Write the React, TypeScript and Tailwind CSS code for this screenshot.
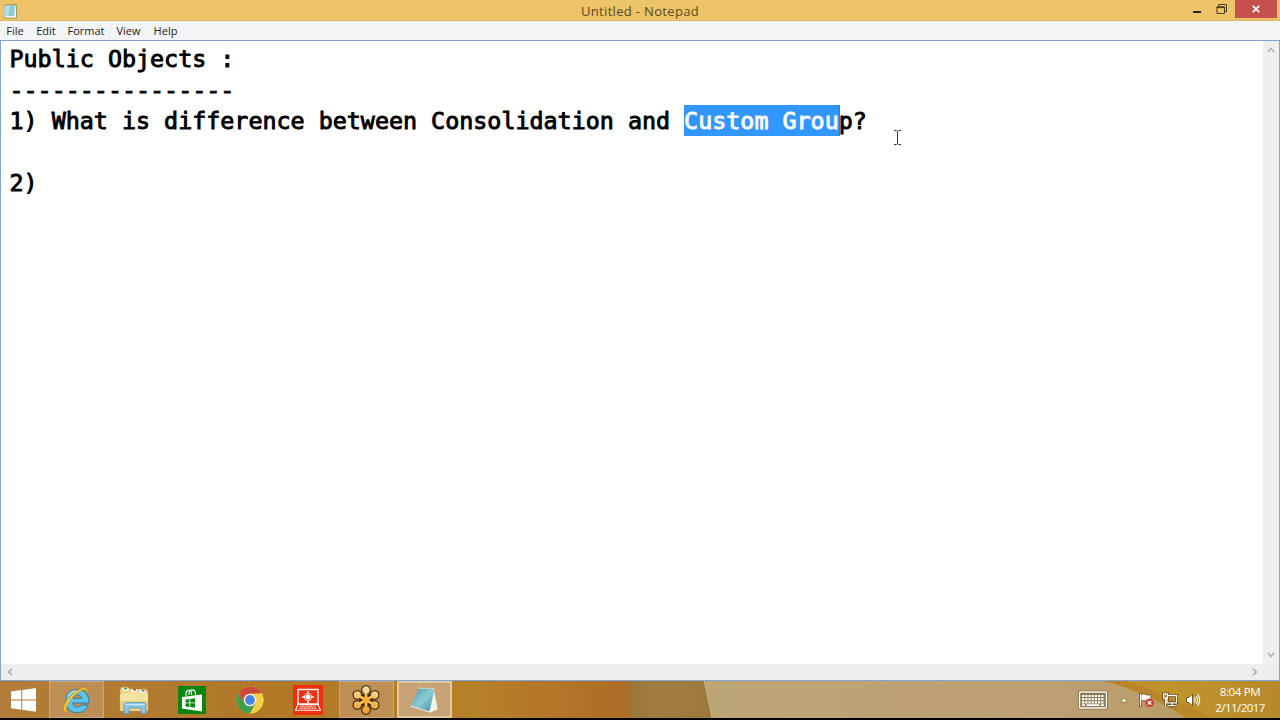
import React from "react";

const menus = [
  { label: "File", cls: "w-[30px]" },
  { label: "Edit", cls: "w-[32px]" },
  { label: "Format", cls: "w-[48px]" },
  { label: "View", cls: "w-[37px]" },
  { label: "Help", cls: "w-[37px]" },
];

function NotepadSmall() {
  return (
    <svg width="16" height="16" viewBox="0 0 16 16" className="shrink-0">
      <path d="M3 2h11.5v13H2z" fill="#f4f6ee" stroke="#8d8a63" strokeWidth=".8" />
      <path d="M2.6 2.2h10.4L12.2 13H1.6z" fill="#8fcbd6" />
      <path d="M3 2.5h5L6 12.500H2z" fill="#b5e0e4" />
      <path d="M3 1.700h11" stroke="#6d8f93" strokeDasharray="1 1" />
    </svg>
  );
}

function WindowsLogo() {
  return (
    <svg width="25" height="24" viewBox="0 0 25 24">
      <g fill="#fff">
        <path d="M0 3.600 10.300 2v9.400H0z" />
        <path d="M11.300 1.900 25 0v11.400H11.300z" />
        <path d="M0 12.400h10.300v9.300L0 20.300z" />
        <path d="M11.300 12.400H25v11.300l-13.700-1.900z" />
      </g>
    </svg>
  );
}

function ExplorerE() {
  return (
    <svg width="30" height="30" viewBox="0 0 30 30">
      <path d="M28 18H11.800c.4 2.700 2 4 4.600 4 1.800 0 3-.7 3.900-2h6.900c-1.700 4.900-5.700 7.700-10.900 7.700C9.200 27.700 4.600 23 4.600 16.300 4.600 9.500 9.200 4.600 16.200 4.600c7.400 0 12 4.900 11.800 13.400zM20.700 13.400c-.4-2.200-2-3.500-4.300-3.500s-4 1.300-4.500 3.500z" fill="#5cc3ea" stroke="#23799f" strokeWidth=".9" />
      <path d="M7 11.500C9 7.500 13 5.500 18 6.300" stroke="#b4e9fa" strokeWidth="1.300" fill="none" />
      <path d="M26.700 8.200C27.500 4 25.500 1.800 21 3.200 15.500 5 8 11.500 4.300 18 1.200 23.700 1.500 28.300 7 26.200 4.200 26 4.800 22.300 7.200 18.400 10.500 12.800 17 6.800 21.800 4.900c2.800-1.100 4.500-.3 4.900 3.300z" fill="#f8c92c" stroke="#c68a12" strokeWidth=".5" />
    </svg>
  );
}

function FolderIcon() {
  return (
    <svg width="32" height="30" viewBox="0 0 32 30">
      <path d="M2 4.500 3.500 2H10l1.500 2H29l1 3v19H2z" fill="#e9d183" stroke="#b99a4e" strokeWidth=".6" />
      <path d="M4.500 3h6v3h-6zM13 4h6v3h-6zM21.500 5h6v3h-6z" fill="#fbf7e2" />
      <path d="M6 2.800h3v1.700H6z" fill="#3fa455" />
      <path d="M15 3.900h3v1.600h-3z" fill="#d5452f" />
      <path d="M23.500 4.900h3v1.600h-3z" fill="#4d83c5" />
      <path d="M2 9 14 7l16 1.500V26H2z" fill="#f3e3a2" />
      <path d="M2 16h28v10H2z" fill="#ead27f" />
      <path d="M6 28.500v-8.500c0-1.500 1-2.500 2.500-2.500h17c1.500 0 2.500 1 2.500 2.500v8.500h-5V23H11v5.500z" fill="#8cc3e3" stroke="#5d98c0" strokeWidth=".8" />
      <path d="M7.500 19.500h19" stroke="#cdeafa" strokeWidth="1.200" />
    </svg>
  );
}

function StoreIcon() {
  return (
    <svg width="28" height="28" viewBox="0 0 28 28">
      <path fill="#0c8510" d="M0 0h28v28H0z" />
      <path d="M8 10V7.500C8 3.500 13 3 13.500 7v2M11 9V6.500c.5-3.700 6-3.500 6.500.8V9" fill="none" stroke="#e9f7e7" strokeWidth="1.200" />
      <path d="m4 11 20-2.500v17L4 22.500z" fill="#fff" />
      <path d="m7.500 13.400 3.900-.4v3.500H7.500zM12.200 12.900l4.800-.6v4.200h-4.800zM7.500 17.300h3.900v3.600l-3.900-.5zM12.200 17.300H17v4.400l-4.800-.6z" fill="#0c8510" />
    </svg>
  );
}

function ChromeIcon() {
  return (
    <svg width="28" height="28" viewBox="0 0 28 28">
      <circle cx="14" cy="14" r="13.500" fill="#f7cf45" />
      <path d="M2.300 7.200A13.500 13.500 0 0 0 14 27.500L20 17 8 17z" fill="#3f9d50" />
      <path d="M2.300 7.200A13.500 13.500 0 0 1 25.700 7.500L14 7.900 8 17z" fill="#cf4a3c" />
      <path d="M14 7.800h12a13.500 13.500 0 0 1-12 19.700L20 17z" fill="#f7cf45" />
      <circle cx="14" cy="14" r="6.300" fill="#f5f3ee" />
      <circle cx="14" cy="14" r="4.900" fill="#4a86e0" />
    </svg>
  );
}

function RemoteIcon() {
  return (
    <svg width="30" height="30" viewBox="0 0 30 30">
      <path fill="#ee2f10" d="M0 0h30v30H0z" />
      <path d="M5 4.500h20v14.500H5z" fill="none" stroke="#fff" strokeWidth="1.300" />
      <circle cx="15" cy="12" r="2.500" fill="#fff" />
      <circle cx="15" cy="12" r="3.700" fill="none" stroke="#fff" strokeWidth=".8" />
      <path d="M15 6v3M15 15v3M9 12h3M18 12h3" stroke="#fff" strokeWidth="1.400" />
      <path d="M5 19.500 2.500 25.300h25L25 19.500z" fill="none" stroke="#fff" strokeWidth="1.100" />
      <path d="M7 21.200h16M6.200 23.200h17.600" stroke="#fff" strokeWidth="1.200" strokeDasharray="1 .6" />
    </svg>
  );
}

function FlowerIcon() {
  const petals = [0, 60, 120, 180, 240, 300];
  const at = (a: number, r: number) => ({
    x: 15 + r * Math.sin((a * Math.PI) / 180),
    y: 15 - r * Math.cos((a * Math.PI) / 180),
  });
  return (
    <svg width="30" height="30" viewBox="0 0 30 30">
      <defs>
        <linearGradient id="petal" x1="0" y1="0" x2="0" y2="30" gradientUnits="userSpaceOnUse">
          <stop offset="0" stopColor="#fbe3a4" />
          <stop offset="1" stopColor="#f29a20" />
        </linearGradient>
      </defs>
      {petals.map((a) => {
        const p = at(a, 10);
        return (
          <g key={a} stroke="#2f1d0b" fill="#2f1d0b">
            <path d={`M15 15 L${p.x} ${p.y}`} strokeWidth="5.5" />
            <circle cx={p.x} cy={p.y} r="4.800" stroke="none" />
          </g>
        );
      })}
      {petals.map((a) => {
        const p = at(a, 10);
        return (
          <g key={a}>
            <path d={`M15 15 L${p.x} ${p.y}`} stroke="#f6bd50" strokeWidth="2.800" />
            <circle cx={p.x} cy={p.y} r="3.700" fill="url(#petal)" />
          </g>
        );
      })}
      <circle cx="15" cy="15" r="3.500" fill="#f5ac33" />
    </svg>
  );
}

function NotepadBig() {
  return (
    <svg width="30" height="28" viewBox="0 0 30 28">
      <defs>
        <linearGradient id="pad" x1="0" y1="0" x2="1" y2="1">
          <stop offset="0" stopColor="#4794a6" />
          <stop offset=".5" stopColor="#8ccbd6" />
          <stop offset="1" stopColor="#3f8ea2" />
        </linearGradient>
      </defs>
      <path d="M25 3 29 23.500 21 27 18 24z" fill="#f5f3e8" stroke="#a8a08a" strokeWidth=".5" />
      <path d="M10 2.500 25.500 3 20.500 25.500 1.500 19.500z" fill="url(#pad)" />
      <path d="m1.500 19.500 19 6v1L1.300 20.500z" fill="#e8f2f0" />
      <path d="M10 2.200 25.500 2.700" stroke="#dcebe8" strokeWidth="1.300" strokeDasharray="1 .8" />
    </svg>
  );
}

function Wallpaper() {
  return (
    <svg className="absolute inset-0" width="1280" height="38" viewBox="0 0 1280 38" preserveAspectRatio="none">
      <defs>
        <linearGradient id="wl">
          <stop offset="0" stopColor="#b27c3a" />
          <stop offset=".2" stopColor="#b17b34" />
          <stop offset=".45" stopColor="#b17926" />
          <stop offset=".75" stopColor="#b68029" />
          <stop offset=".87" stopColor="#b5762a" />
          <stop offset="1" stopColor="#ae6c26" />
        </linearGradient>
        <linearGradient id="wm">
          <stop offset="0" stopColor="#ae6c26" />
          <stop offset=".12" stopColor="#9a7a3a" />
          <stop offset=".35" stopColor="#a07c40" />
          <stop offset="1" stopColor="#9c7a3c" />
        </linearGradient>
        <linearGradient id="wr">
          <stop offset="0" stopColor="#bda676" />
          <stop offset=".6" stopColor="#bca072" />
          <stop offset="1" stopColor="#b7985f" />
        </linearGradient>
        <linearGradient id="wo">
          <stop offset="0" stopColor="#bd8c38" />
          <stop offset=".4" stopColor="#c0942c" />
          <stop offset="1" stopColor="#b68a2c" />
        </linearGradient>
      </defs>
      <path fill="url(#wl)" d="M0 0h628v38H0z" />
      <path fill="url(#wm)" d="M624 0h80l8 38h-88z" />
      <path fill="url(#wr)" d="M704 0h576v38H712z" />
      <path fill="url(#wo)" d="M1104 0h176v38h-92C1166 24 1142 10 1104 0z" />
      <path fill="#b37d20" opacity=".55" d="M1104 0h22C1165 12 1190 26 1214 38h-26C1166 24 1142 10 1104 0z" />
    </svg>
  );
}

function TaskButton({ state, children }: { state: "idle" | "open" | "active"; children: React.ReactNode }) {
  const skin = {
    idle: "border border-transparent",
    open: "border border-[#cda878] bg-[#c0925a]/85",
    active: "border-2 border-[#dfc9a4] bg-[#c7a375]",
  }[state];
  return <div className={`flex h-[37px] w-[55px] items-center justify-center pr-px ${skin}`}>{children}</div>;
}

function Keyboard() {
  return (
    <svg width="30" height="20" viewBox="0 0 30 20">
      <rect x="1.500" y="2" width="27" height="16" rx="1" fill="none" stroke="#5f5138" strokeWidth="2.600" />
      <rect x="1.500" y="2" width="27" height="16" rx="1" fill="#8d7850" stroke="#fff" strokeWidth="1.400" />
      <path d="M4 6h22M4 9.200h22M4 12.300h22" stroke="#fff" strokeWidth="2.200" strokeDasharray="2.300 .9" />
      <path d="M4 15.200h3M8.500 15.200h13M23 15.200h3" stroke="#fff" strokeWidth="1.700" />
    </svg>
  );
}

function FlagIcon() {
  return (
    <svg width="16" height="16" viewBox="0 0 16 16">
      <path d="M1.500 1.500v13" stroke="#6b4b1c" strokeWidth="3" />
      <path d="M2 2.500q3-1.500 5 0t5 0v6.500q-3 1-5 0t-5 0z" fill="#fff" stroke="#6b4b1c" strokeWidth=".8" />
      <path d="M1.500 2v12" stroke="#fff" strokeWidth="1.300" />
      <circle cx="10.500" cy="10.800" r="4.300" fill="#cf3b33" />
      <path d="m8.700 9 3.600 3.600M12.300 9l-3.600 3.600" stroke="#fff" strokeWidth="1.300" />
    </svg>
  );
}

function NetworkIcon() {
  return (
    <svg width="16" height="16" viewBox="0 0 16 16" fill="none">
      <path d="M5 3.500h9.500v7.300H5zM10 11v2.500M6 13.700h7.500M1.500 2h4v4h-4zM3.500 6v8" stroke="#5e4314" strokeWidth="3" />
      <path d="M5 3.500h9.500v7.300H5zM10 11v2.500M6 13.700h7.500M3.500 6v8" stroke="#fff" strokeWidth="1.300" />
      <path d="M1.500 1.800h4v4.400h-4z" fill="#a98745" stroke="#fff" strokeWidth="1.200" />
    </svg>
  );
}

function SpeakerIcon() {
  return (
    <svg width="16" height="16" viewBox="0 0 16 16" fill="none">
      <path d="M1.500 5.500H4L7.500 2v12L4 10.500H1.500z" fill="#fff" stroke="#6b4b1c" strokeWidth=".9" />
      <path d="M9.300 5.500q1.500 2.500 0 5M11.200 4q2.600 4 0 8M13 2.500q3.300 5.500 0 11" stroke="#fff" strokeWidth="1.100" />
    </svg>
  );
}

function Chevron({ d }: { d: string }) {
  return (
    <svg width="8" height="8" viewBox="0 0 8 8" fill="none" className="shrink-0">
      <path d={d} stroke="#b3b3b3" strokeWidth="1.700" />
    </svg>
  );
}

export default function App() {
  return (
    <div className="flex h-[720px] w-[1280px] flex-col overflow-hidden bg-white font-['Open_Sans',sans-serif]">
      <header className="grid h-[21px] shrink-0 grid-cols-[1fr_auto_1fr] border-b border-[#dcb55f] bg-[#edc467]">
        <div className="flex items-center pl-[2px]">
          <NotepadSmall />
        </div>
        <h1 className="pt-px text-[13px] leading-5 tracking-[0.33px] text-[#5a4a24]">Untitled - Notepad</h1>
        <div className="flex h-[18px] justify-end">
          <div className="flex w-[25px] items-center justify-center pt-[5px]">
            <div className="h-[2px] w-[8px] bg-[#2b2413]" />
          </div>
          <div className="flex w-[25px] items-center justify-center">
            <svg width="11" height="11" viewBox="0 0 11 11" fill="none" stroke="#4a3d1c">
              <path d="M2.500 2V.500h8v7H9" />
              <path d="M1 3h7.500v6.500H1z" />
              <path d="M.500 3.300h8.500" strokeWidth="1.600" />
            </svg>
          </div>
          <div className="ml-px mr-[3px] flex w-[42px] items-center justify-center bg-[#c6504e]">
            <svg width="8" height="8" viewBox="0 0 8 8">
              <path d="m.800.800 6.400 6.400M7.200.800.800 7.200" stroke="#fff" strokeWidth="1.700" />
            </svg>
          </div>
        </div>
      </header>

      <nav className="flex h-[19px] shrink-0 bg-[#f4f5f6] text-center text-[11px] leading-[19px] text-[#222]">
        {menus.map((m) => (
          <div key={m.label} className={m.cls}>
            {m.label}
          </div>
        ))}
      </nav>

      <main className="flex h-[641px] shrink-0 flex-col border border-[#7fa6d6] bg-white">
        <div className="flex min-h-0 flex-1">
          <div className="flex-1 whitespace-pre pl-[8.5px] pt-[3px] font-['DejaVu_Sans_Mono',monospace] text-[23.35px] leading-[31px] text-black [-webkit-text-stroke:0.9px]">
            <p>Public Objects :</p>
            <p>----------------</p>
            <p className="relative">
              1) What is difference between Consolidation and{" "}
              <span className="-mr-px -mt-px inline-block h-[31px] border-r border-[#8a6a4a] bg-[#3297fd] pt-px align-top text-white">Custom Grou</span>p?
              <svg className="absolute left-[883px] top-[23px]" width="9" height="17" viewBox="0 0 9 17" fill="none">
                <path d="M1 1.500h2.500l1 1 1-1H8M4.500 2v13M1 15.500h2.500l1-1 1 1H8" stroke="#333" />
              </svg>
            </p>
            <p> </p>
            <p>2)</p>
          </div>
          <div className="flex w-[16px] flex-col items-center justify-between bg-[#efefef] py-[5px] pr-px">
            <Chevron d="m1 6 3-3.500L7 6" />
            <Chevron d="m1 2 3 3.500L7 2" />
          </div>
        </div>
        <div className="flex h-[16px] shrink-0 items-center justify-between bg-[#eeeeee] pb-px pl-[5px] pr-[20px]">
          <Chevron d="M6 1 2.500 4 6 7" />
          <Chevron d="m2 1 3.500 3L2 7" />
        </div>
      </main>

      <footer className="relative h-[37px] shrink-0 overflow-hidden">
        <Wallpaper />
        <div className="relative flex h-full items-center">
          <div className="flex w-[49px] items-center pl-[11px]">
            <WindowsLogo />
          </div>
          <div className="flex gap-[3px]">
            <TaskButton state="open"><ExplorerE /></TaskButton>
            <TaskButton state="idle"><FolderIcon /></TaskButton>
            <TaskButton state="idle"><StoreIcon /></TaskButton>
            <TaskButton state="idle"><ChromeIcon /></TaskButton>
            <TaskButton state="idle"><RemoteIcon /></TaskButton>
            <TaskButton state="open"><FlowerIcon /></TaskButton>
            <TaskButton state="active"><NotepadBig /></TaskButton>
          </div>
          <div className="ml-auto flex items-center">
            <Keyboard />
            <svg className="ml-[12px]" width="8" height="6" viewBox="0 0 8 6">
              <path d="M.500 5 4 1l3.500 4z" fill="#fff" stroke="#7a6032" strokeWidth=".6" />
            </svg>
            <div className="ml-[11px] flex gap-[7px]">
              <FlagIcon />
              <NetworkIcon />
              <SpeakerIcon />
            </div>
            <div className="mr-[4px] ml-[3px] w-[72px] text-center text-[11.5px] leading-4 tracking-[-0.35px] text-white">
              <div>8:04 PM</div>
              <div className="tracking-[-0.55px]">2/11/2017</div>
            </div>
          </div>
        </div>
      </footer>
      <div className="flex-1 bg-black" />
    </div>
  );
}
